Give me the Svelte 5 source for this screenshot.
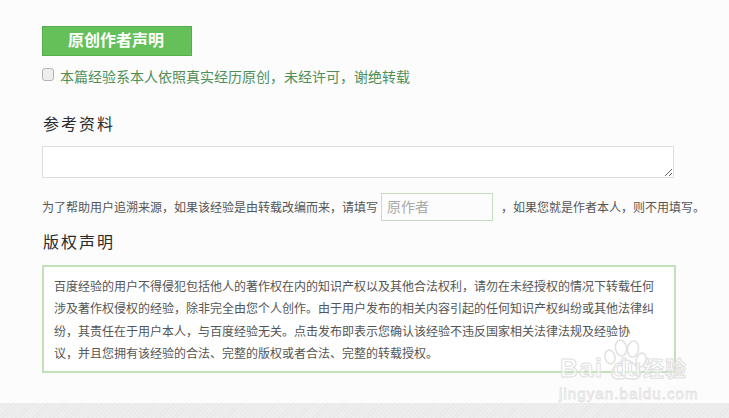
<script>
  const notice = [
    '百度经验的用户不得侵犯包括他人的著作权在内的知识产权以及其他合法权利，请勿在未经授权的情况下转载任何',
    '涉及著作权侵权的经验，除非完全由您个人创作。由于用户发布的相关内容引起的任何知识产权纠纷或其他法律纠',
    '纷，其责任在于用户本人，与百度经验无关。点击发布即表示您确认该经验不违反国家相关法律法规及经验协',
    '议，并且您拥有该经验的合法、完整的版权或者合法、完整的转载授权。'
  ];
</script>

<div class="page">
  <main class="content">
    <div class="badge">原创作者声明</div>
    <label class="claim">
      <input type="checkbox" />
      <span>本篇经验系本人依照真实经历原创，未经许可，谢绝转载</span>
    </label>

    <h2 class="ref-title">参考资料</h2>
    <textarea class="ref-input"></textarea>

    <div class="source">
      <span>为了帮助用户追溯来源，如果该经验是由转载改编而来，请填写</span>
      <input class="author" type="text" placeholder="原作者" />
      <span class="tail">，如果您就是作者本人，则不用填写。</span>
    </div>

    <h2 class="copy-title">版权声明</h2>
    <div class="notice">
      {#each notice as line}
        <p>{line}</p>
      {/each}
    </div>
  </main>
  <footer class="band"></footer>

  <div class="mark" aria-hidden="true">
    <svg class="paw" viewBox="0 0 46 44" width="46" height="44">
      <g fill="rgba(255,255,255,.5)" stroke="#e2e2e2" stroke-width="1.6">
        <ellipse cx="7" cy="18" rx="5" ry="7" transform="rotate(-15 7 18)" />
        <ellipse cx="18" cy="9" rx="5.500" ry="8" transform="rotate(-8 18 9)" />
        <ellipse cx="30" cy="10" rx="5.500" ry="8" transform="rotate(8 30 10)" />
        <ellipse cx="38" cy="21" rx="5" ry="7" transform="rotate(18 38 21)" />
        <path d="M23 21c-6 0-8 5-12 8-4 4-3 10 3 11 3 .5 6-.7 9-.7s6 1.200 9 .7c6-1 7-7 3-11-4-3-6-8-12-8z" />
      </g>
    </svg>
    <span class="mark-b">Bai</span>
    <span class="mark-d">du</span>
    <span class="mark-cn">经验</span>
    <span class="mark-url">jingyan.baidu.com</span>
  </div>
</div>

<style>
  :global(body) {
    margin: 0;
    background: #fcfcfc;
  }
  .page {
    position: relative;
    width: 729px;
    height: 418px;
    overflow: hidden;
    display: flex;
    flex-direction: column;
    font-family: "Liberation Sans", "Noto Sans CJK SC", sans-serif;
  }
  .content {
    flex: 1;
    padding: 26px 0 0 42px;
    box-sizing: border-box;
  }
  .badge {
    width: 150px;
    height: 30px;
    box-sizing: border-box;
    background: #66c05a;
    border: 1px solid #56ad4c;
    color: #fff;
    font-size: 16px;
    font-weight: 700;
    line-height: 28px;
    text-align: center;
    padding-right: 2px;
  }
  .claim {
    display: flex;
    align-items: center;
    margin-top: 11px;
    height: 18px;
    color: #4e8f58;
    font-size: 14px;
  }
  .claim input {
    appearance: none;
    width: 12px;
    height: 13px;
    margin: -3px 6px 0 0;
    box-sizing: border-box;
    background: #eeeeee;
    border: 1px solid #b4b4b4;
    border-radius: 3px;
  }
  h2 {
    margin: 0;
    font-weight: 400;
    font-size: 16px;
    letter-spacing: 2px;
    color: #2a2a2a;
    line-height: 24px;
  }
  .ref-title {
    margin-top: 28px;
    margin-left: 1px;
  }
  .ref-input {
    display: block;
    width: 632px;
    height: 32px;
    margin: 9px 0 0;
    box-sizing: border-box;
    background: #fff;
    border: 1px solid #dedede;
    outline: none;
    padding: 0;
  }
  .source {
    display: flex;
    align-items: center;
    margin-top: 15px;
    height: 28px;
    font-size: 12px;
    color: #555;
    white-space: nowrap;
  }
  .source span {
    position: relative;
    top: -1px;
  }
  .author {
    width: 112px;
    height: 28px;
    box-sizing: border-box;
    margin-left: 3px;
    padding: 0 5px;
    border: 1px solid #c3dfbc;
    background: #fcfcfc;
    font-size: 14px;
    font-family: inherit;
    outline: none;
  }
  .author::placeholder {
    color: #aaa;
  }
  .tail {
    margin-left: 8px;
  }
  .copy-title {
    margin-top: 10px;
    margin-left: 1px;
  }
  .notice {
    width: 634px;
    height: 108px;
    box-sizing: border-box;
    margin-top: 10px;
    padding: 9px 10px 0;
    background: #fff;
    border: 2px solid #c2e0ba;
  }
  .notice p {
    margin: 0;
    font-size: 12px;
    line-height: 22.400px;
    color: #555;
    white-space: nowrap;
  }
  .band {
    height: 15px;
    background-color: #ececec;
    background-image: repeating-linear-gradient(135deg, #e8e8e8 0 1px, #eeeeee 1px 3px);
  }
  .mark {
    position: absolute;
    left: 558px;
    top: 338px;
    width: 135px;
    height: 66px;
    pointer-events: none;
  }
  .mark span {
    position: absolute;
    white-space: nowrap;
    color: rgba(255, 255, 255, .55);
    -webkit-text-stroke: 1px #e0e0e0;
    font-weight: 700;
  }
  .paw {
    position: absolute;
    left: 45px;
    top: 1px;
  }
  .mark-b {
    left: 2px;
    top: 17px;
    font-size: 25px;
    line-height: 26px;
    letter-spacing: 1.500px;
  }
  .mark-d {
    left: 55px;
    top: 17px;
    font-size: 23px;
    line-height: 26px;
  }
  .mark .mark-cn {
    left: 85px;
    top: 19px;
    font-size: 21px;
    line-height: 24px;
    letter-spacing: 1px;
  }
  .mark .mark-url {
    left: 1px;
    top: 47px;
    font-size: 15px;
    line-height: 18px;
    letter-spacing: 1.100px;
    font-weight: 400;
    -webkit-text-stroke: .8px #e2e2e2;
  }
</style>
